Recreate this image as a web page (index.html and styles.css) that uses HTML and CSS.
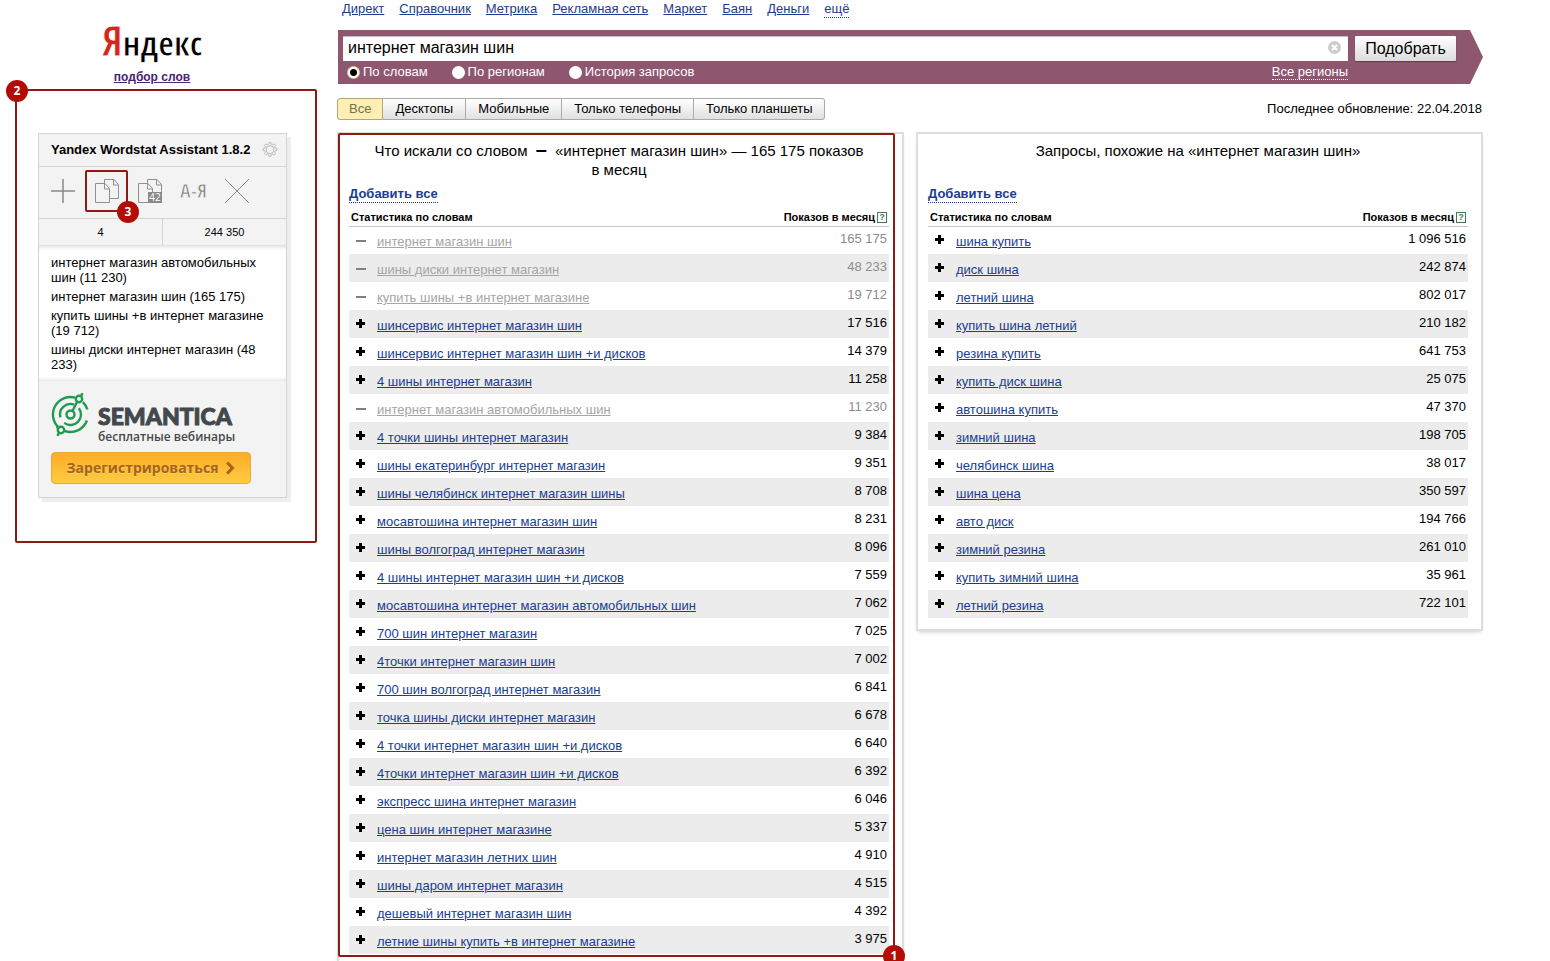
FILE: index.html
```html
<!DOCTYPE html>
<html lang="ru">
<head>
<meta charset="utf-8">
<title>Подбор слов</title>
<link rel="stylesheet" href="styles.css">
</head>
<body>
<div class="page">
  <aside class="side">
    <div class="logo"><span class="logo-first">Я</span>ндекс</div>
    <a class="sublogo" href="#">подбор слов</a>
    <div class="side-frame">
      <span class="badge badge-2">2</span>
      <section class="assist">
        <header class="assist-head">
          <h2 class="assist-title">Yandex Wordstat Assistant 1.8.2</h2>
          <button class="icon-btn" type="button" aria-label="Настройки">
            <svg width="16" height="16" viewBox="0 0 16 16" fill="none" stroke="#bdbdbd"><path d="M6.600 2.400 7 .6h2l.4 1.800 1.200.5 1.600-1 1.400 1.400-1 1.600.5 1.200 1.900.4v2l-1.900.4-.5 1.200 1 1.600-1.400 1.400-1.600-1-1.200.5-.4 1.800H7l-.4-1.800-1.200-.5-1.600 1-1.400-1.400 1-1.600-.5-1.200L1 8.500v-2l1.900-.4.5-1.200-1-1.600 1.400-1.400 1.600 1z"/><circle cx="8" cy="7.700" r="4"/></svg>
          </button>
        </header>
        <div class="tools">
          <button class="icon-btn" type="button" aria-label="Добавить"><svg width="24" height="24" viewBox="0 0 24 24" stroke="#8a8a8a" stroke-width="1.500"><path d="M12 0v24M0 12h24"/></svg></button>
          <span class="tool-mark">
            <button class="icon-btn" type="button" aria-label="Копировать"><svg width="24" height="24" viewBox="0 0 24 24" fill="none" stroke="#909090"><path d="M.5 4.500H10l4.500 5v14H.5zM9.500 4.500v5.500h5M9.500 4V.5H19l4.500 5v14H15M18.500.5V6h5"/></svg></button>
            <span class="badge badge-3">3</span>
          </span>
          <button class="icon-btn copy-count" type="button" aria-label="Копировать с частотой"><svg width="24" height="24" viewBox="0 0 24 24" fill="none" stroke="#909090"><path d="M.5 4.500H10l4.500 5v14H.5zM9.500 4.500v5.500h5M9.500 4V.5H19l4.500 5v14H15M18.500.5V6h5"/></svg><span class="count">42</span></button>
          <button class="icon-btn sort" type="button">А-Я</button>
          <button class="icon-btn" type="button" aria-label="Очистить"><svg width="24" height="24" viewBox="0 0 24 24" stroke="#8a8a8a"><path d="M0 0l24 24M24 0 0 24"/></svg></button>
        </div>
        <div class="totals"><span class="total">4</span><span class="total">244 350</span></div>
        <ul class="words">
          <li>интернет магазин автомобильных шин (11 230)</li>
          <li>интернет магазин шин (165 175)</li>
          <li>купить шины +в интернет магазине (19 712)</li>
          <li>шины диски интернет магазин (48 233)</li>
        </ul>
        <div class="promo">
          <div class="brand">
            <svg width="38" height="43" viewBox="0 0 38 43" fill="none" stroke="#1f9a50" stroke-width="2.400"><path d="M24 4.600A17.500 17.500 0 0 0 7.100 33.900M31.900 9.100a17.500 17.500 0 0 1 4.500 7.400M35.900 27.500A17.500 17.500 0 0 1 13.500 37.900M23 11.600A10.500 10.500 0 0 0 9.400 24.400M27.900 15.200A10.500 10.500 0 0 1 13.200 29.900M21.500 18 26 9"/><circle cx="19.500" cy="21.500" r="4"/><circle cx="28" cy="6" r="3.200"/><circle cx="10" cy="37" r="3.200"/><path d="M30 3.500 31.500 0M8 39.500 6.500 43M7 35.500l-1-2"/></svg>
            <div class="brand-text"><b class="brand-name">SEMANTICA</b><span class="brand-sub">бесплатные вебинары</span></div>
          </div>
          <button class="signup" type="button">Зарегистрироваться<svg width="9" height="14" viewBox="0 0 9 14" fill="none" stroke="#a5641c" stroke-width="3"><path d="M1 1.500 6.500 7 1 12.500"/></svg></button>
        </div>
      </section>
    </div>
  </aside>
  <main class="main">
    <nav class="nav">
      <a href="#">Директ</a><a href="#">Справочник</a><a href="#">Метрика</a><a href="#">Рекламная сеть</a><a href="#">Маркет</a><a href="#">Баян</a><a href="#">Деньги</a><a class="more" href="#">ещё</a>
    </nav>
    <form class="search">
      <div class="search-left">
        <div class="field">
          <input class="query" type="text" value="интернет магазин шин" aria-label="Запрос">
          <button class="clear" type="button" aria-label="Очистить запрос"><svg width="13" height="13" viewBox="0 0 13 13"><circle cx="6.500" cy="6.500" r="6.500" fill="#ccc"/><path d="M4 4l5 5M9 4 4 9" stroke="#fff" stroke-width="2"/></svg></button>
        </div>
        <div class="modes">
          <label class="mode"><input type="radio" name="mode" checked>По словам</label>
          <label class="mode"><input type="radio" name="mode">По регионам</label>
          <label class="mode"><input type="radio" name="mode">История запросов</label>
          <a class="regions" href="#">Все регионы</a>
        </div>
      </div>
      <button class="submit" type="button">Подобрать</button>
    </form>
    <div class="bar">
      <div class="tabs">
        <button class="tab tab-on" type="button">Все</button><button class="tab" type="button">Десктопы</button><button class="tab" type="button">Мобильные</button><button class="tab" type="button">Только телефоны</button><button class="tab" type="button">Только планшеты</button>
      </div>
      <span class="updated">Последнее обновление: 22.04.2018</span>
    </div>
    <div class="panels">
      <section class="panel panel-tall">
        <h1 class="title">Что искали со словом <b class="dash">–</b> «интернет магазин шин» — 165 175 показов в месяц</h1>
        <a class="add-all" href="#">Добавить все</a>
        <table class="stats">
          <thead><tr><th class="left" colspan="2">Статистика по словам</th><th class="right">Показов в месяц<a class="help" href="#">?</a></th></tr></thead>
          <tbody>
            <tr class="used"><td><button class="sign minus" aria-label="Убрать"></button></td><td><a href="#">интернет магазин шин</a></td><td>165 175</td></tr>
            <tr class="used"><td><button class="sign minus" aria-label="Убрать"></button></td><td><a href="#">шины диски интернет магазин</a></td><td>48 233</td></tr>
            <tr class="used"><td><button class="sign minus" aria-label="Убрать"></button></td><td><a href="#">купить шины +в интернет магазине</a></td><td>19 712</td></tr>
            <tr><td><button class="sign plus" aria-label="Добавить"></button></td><td><a href="#">шинсервис интернет магазин шин</a></td><td>17 516</td></tr>
            <tr><td><button class="sign plus" aria-label="Добавить"></button></td><td><a href="#">шинсервис интернет магазин шин +и дисков</a></td><td>14 379</td></tr>
            <tr><td><button class="sign plus" aria-label="Добавить"></button></td><td><a href="#">4 шины интернет магазин</a></td><td>11 258</td></tr>
            <tr class="used"><td><button class="sign minus" aria-label="Убрать"></button></td><td><a href="#">интернет магазин автомобильных шин</a></td><td>11 230</td></tr>
            <tr><td><button class="sign plus" aria-label="Добавить"></button></td><td><a href="#">4 точки шины интернет магазин</a></td><td>9 384</td></tr>
            <tr><td><button class="sign plus" aria-label="Добавить"></button></td><td><a href="#">шины екатеринбург интернет магазин</a></td><td>9 351</td></tr>
            <tr><td><button class="sign plus" aria-label="Добавить"></button></td><td><a href="#">шины челябинск интернет магазин шины</a></td><td>8 708</td></tr>
            <tr><td><button class="sign plus" aria-label="Добавить"></button></td><td><a href="#">мосавтошина интернет магазин шин</a></td><td>8 231</td></tr>
            <tr><td><button class="sign plus" aria-label="Добавить"></button></td><td><a href="#">шины волгоград интернет магазин</a></td><td>8 096</td></tr>
            <tr><td><button class="sign plus" aria-label="Добавить"></button></td><td><a href="#">4 шины интернет магазин шин +и дисков</a></td><td>7 559</td></tr>
            <tr><td><button class="sign plus" aria-label="Добавить"></button></td><td><a href="#">мосавтошина интернет магазин автомобильных шин</a></td><td>7 062</td></tr>
            <tr><td><button class="sign plus" aria-label="Добавить"></button></td><td><a href="#">700 шин интернет магазин</a></td><td>7 025</td></tr>
            <tr><td><button class="sign plus" aria-label="Добавить"></button></td><td><a href="#">4точки интернет магазин шин</a></td><td>7 002</td></tr>
            <tr><td><button class="sign plus" aria-label="Добавить"></button></td><td><a href="#">700 шин волгоград интернет магазин</a></td><td>6 841</td></tr>
            <tr><td><button class="sign plus" aria-label="Добавить"></button></td><td><a href="#">точка шины диски интернет магазин</a></td><td>6 678</td></tr>
            <tr><td><button class="sign plus" aria-label="Добавить"></button></td><td><a href="#">4 точки интернет магазин шин +и дисков</a></td><td>6 640</td></tr>
            <tr><td><button class="sign plus" aria-label="Добавить"></button></td><td><a href="#">4точки интернет магазин шин +и дисков</a></td><td>6 392</td></tr>
            <tr><td><button class="sign plus" aria-label="Добавить"></button></td><td><a href="#">экспресс шина интернет магазин</a></td><td>6 046</td></tr>
            <tr><td><button class="sign plus" aria-label="Добавить"></button></td><td><a href="#">цена шин интернет магазине</a></td><td>5 337</td></tr>
            <tr><td><button class="sign plus" aria-label="Добавить"></button></td><td><a href="#">интернет магазин летних шин</a></td><td>4 910</td></tr>
            <tr><td><button class="sign plus" aria-label="Добавить"></button></td><td><a href="#">шины даром интернет магазин</a></td><td>4 515</td></tr>
            <tr><td><button class="sign plus" aria-label="Добавить"></button></td><td><a href="#">дешевый интернет магазин шин</a></td><td>4 392</td></tr>
            <tr><td><button class="sign plus" aria-label="Добавить"></button></td><td><a href="#">летние шины купить +в интернет магазине</a></td><td>3 975</td></tr>
          </tbody>
        </table>
        <div class="results-frame"><span class="badge badge-1">1</span></div>
      </section>
      <section class="panel">
        <h2 class="title">Запросы, похожие на «интернет магазин шин»</h2>
        <a class="add-all" href="#">Добавить все</a>
        <table class="stats">
          <thead><tr><th class="left" colspan="2">Статистика по словам</th><th class="right">Показов в месяц<a class="help" href="#">?</a></th></tr></thead>
          <tbody>
            <tr><td><button class="sign plus" aria-label="Добавить"></button></td><td><a href="#">шина купить</a></td><td>1 096 516</td></tr>
            <tr><td><button class="sign plus" aria-label="Добавить"></button></td><td><a href="#">диск шина</a></td><td>242 874</td></tr>
            <tr><td><button class="sign plus" aria-label="Добавить"></button></td><td><a href="#">летний шина</a></td><td>802 017</td></tr>
            <tr><td><button class="sign plus" aria-label="Добавить"></button></td><td><a href="#">купить шина летний</a></td><td>210 182</td></tr>
            <tr><td><button class="sign plus" aria-label="Добавить"></button></td><td><a href="#">резина купить</a></td><td>641 753</td></tr>
            <tr><td><button class="sign plus" aria-label="Добавить"></button></td><td><a href="#">купить диск шина</a></td><td>25 075</td></tr>
            <tr><td><button class="sign plus" aria-label="Добавить"></button></td><td><a href="#">автошина купить</a></td><td>47 370</td></tr>
            <tr><td><button class="sign plus" aria-label="Добавить"></button></td><td><a href="#">зимний шина</a></td><td>198 705</td></tr>
            <tr><td><button class="sign plus" aria-label="Добавить"></button></td><td><a href="#">челябинск шина</a></td><td>38 017</td></tr>
            <tr><td><button class="sign plus" aria-label="Добавить"></button></td><td><a href="#">шина цена</a></td><td>350 597</td></tr>
            <tr><td><button class="sign plus" aria-label="Добавить"></button></td><td><a href="#">авто диск</a></td><td>194 766</td></tr>
            <tr><td><button class="sign plus" aria-label="Добавить"></button></td><td><a href="#">зимний резина</a></td><td>261 010</td></tr>
            <tr><td><button class="sign plus" aria-label="Добавить"></button></td><td><a href="#">купить зимний шина</a></td><td>35 961</td></tr>
            <tr><td><button class="sign plus" aria-label="Добавить"></button></td><td><a href="#">летний резина</a></td><td>722 101</td></tr>
          </tbody>
        </table>
      </section>
    </div>
  </main>
</div>
</body>
</html>
```

FILE: styles.css
```css
* { box-sizing: border-box; }
body { margin: 0; background: #fff; color: #000; font: 13px/16px "Liberation Sans", Arial, sans-serif; }
button, input { font: inherit; color: inherit; margin: 0; padding: 0; }
button { border: 0; background: none; cursor: pointer; }
svg { display: block; flex: none; }
a { color: #1a3d8f; }

.page { display: flex; height: 100vh; overflow: hidden; }

/* Sidebar */
.side { display: flex; flex-direction: column; align-items: center; width: 304px; flex: none; padding-top: 14px; }
.logo { font: 34px/52px "Open Sans Condensed", "Liberation Sans Narrow", sans-serif; -webkit-text-stroke: 1px #fff; }
.logo-first { color: #d4261c; font-size: 42px; }
.sublogo { color: #4a2375; font-weight: bold; font-size: 12px; line-height: 16px; }
.side-frame { position: relative; width: 302px; height: 454px; margin: 4px 0 0 28px; padding: 42px 0 0 21px; border: 2px solid #8c1c13; border-radius: 2px; }
.badge { position: absolute; display: flex; align-items: center; justify-content: center; width: 22px; height: 22px; border-radius: 50%; background: #b30c05; color: #fff; font: bold 12px/14px "Noto Sans", "Open Sans", sans-serif; }
.badge-2 { left: -11px; top: -11px; }

.assist { width: 249px; border: 1px solid #d2d4d6; background: #f3f3f3; box-shadow: 4px 4px 0 #eee; }
.assist-head { display: flex; align-items: center; justify-content: space-between; height: 33px; padding: 0 8px 0 12px; border-bottom: 1px solid #d2d4d6; }
.assist-title { margin: 0; font-size: 13px; }
.icon-btn { display: block; color: #909090; }
.tools { display: flex; align-items: center; height: 52px; padding: 0 12px 4px; border-bottom: 1px solid #d2d4d6; }
.tool-mark { position: relative; display: flex; align-items: center; justify-content: center; width: 43px; height: 42px; margin: 0 10px; border: 2px solid #8c1c13; border-radius: 2px; }
.badge-3 { left: 30px; top: 29px; }
.copy-count { position: relative; }
.count { position: absolute; right: 0; bottom: 0; width: 14px; background: #8a8a8a; color: #fff; font: 10px/11px "Open Sans", sans-serif; }
.sort { width: 63px; color: #808080; font: 20px/24px "Open Sans Condensed", "Liberation Sans Narrow", sans-serif; text-align: center; -webkit-text-stroke: 1px #f3f3f3; }
.totals { display: flex; height: 27px; border-bottom: 1px solid #e2e2e2; font-size: 11px; line-height: 26px; text-align: center; }
.total { flex: 1; }
.total + .total { border-left: 1px solid #d2d4d6; }
.words { margin: 0; padding: 9px 20px 9px 12px; list-style: none; background: #fff; line-height: 15px; box-shadow: inset 0 4px 4px -3px #ddd, inset 0 -4px 4px -3px #ddd; }
.words li + li { margin-top: 4px; }
.promo { padding: 12px 12px 13px; }
.brand { display: flex; align-items: flex-start; gap: 9px; height: 59px; }
.brand-text { display: flex; flex-direction: column; color: #43484c; }
.brand-name { padding-top: 9px; font: 900 23px/28px Lato, sans-serif; -webkit-text-stroke: 1px #43484c; }
.brand-sub { font: 600 12px/14px "Open Sans", sans-serif; }
.signup { display: flex; align-items: center; justify-content: center; gap: 8px; width: 200px; height: 32px; border: 1px solid #e5a83a; border-radius: 4px; background: linear-gradient(#ffad26, #fdcb41); color: #a5641c; font: bold 14px/20px "Open Sans", sans-serif; text-shadow: 0 1px 0 #fdd266; }

/* Main column */
.main { flex: 1; min-width: 0; margin: 0 67px 0 33px; }
.nav { display: flex; gap: 15px; padding: 1px 5px 0; height: 30px; }
.more { text-decoration: none; border-bottom: 1px dotted #1a3d8f; align-self: flex-start; }
.search { display: flex; align-items: flex-start; gap: 7px; height: 54px; margin-left: 1px; padding: 6px 27px 0 5px; background: #8f566f; clip-path: polygon(0 0, calc(100% - 13px) 0, 100% 50%, calc(100% - 13px) 100%, 0 100%); }
.search-left { flex: 1; }
.field { position: relative; }
.query { display: block; width: 100%; height: 25px; padding: 0 30px 1px 5px; border: 0; box-shadow: inset 0 1px 1px #bbb; background: #fff; font-size: 16px; outline: 0; }
.clear { position: absolute; right: 7px; top: 5px; }
.modes { display: flex; align-items: flex-start; gap: 24px; padding: 3px 0 0 4px; color: #fff; }
.mode { display: flex; align-items: center; gap: 3px; }
.mode input { appearance: none; width: 13px; height: 13px; border-radius: 50%; background: #fff; }
.mode input:checked { border: 1px solid #e0cfa0; background: radial-gradient(#000 3px, #fff 4px); }
.regions { margin-left: auto; line-height: 15px; color: #fff; text-decoration: none; border-bottom: 1px dotted #fff; }
.submit { width: 101px; height: 25px; border-radius: 1px; background: linear-gradient(#fff, #dcdcdc); font-size: 16px; box-shadow: 0 1px 1px #63384b; }
.bar { display: flex; align-items: center; justify-content: space-between; height: 48px; padding: 1px 1px 0 0; }
.tabs { display: flex; }
.tab { height: 22px; padding: 0 12px; border: 1px solid #aaa; border-left-width: 0; background: linear-gradient(#fff, #e0e0e0); }
.tab:last-child { border-radius: 0 3px 3px 0; }
.tab-on { padding: 0 11px; border-left-width: 1px; border-radius: 3px 0 0 3px; border-color: #b5a56e; background: #fdeeb3; color: #77704c; }
.panels { display: grid; grid-template-columns: 1fr 1fr; align-items: start; gap: 12px; }
.panel { position: relative; padding: 7px 13px 11px 10px; border: 2px solid #ddd; box-shadow: 0 3px 4px -2px #ccc; }
.panel-tall { padding-bottom: 40px; }
.title { margin: 0; height: 45px; padding: 0 22px; font-size: 15px; line-height: 19px; font-weight: normal; text-align: center; }
.dash { margin: 0 4px; font-size: 20px; line-height: 1px; }
.add-all { display: inline-block; line-height: 16px; font-weight: bold; text-decoration: none; border-bottom: 1px dotted #1a3d8f; }
.stats { width: 100%; margin-top: 4px; border-collapse: collapse; }
.stats th { height: 19px; padding: 2px 2px 1px; border-bottom: 1px solid #c4c8c4; font-size: 11px; line-height: 14px; }
.left { text-align: left; }
.right { text-align: right; }
.help { display: inline-block; width: 10px; height: 11px; margin-left: 2px; border: 1px solid #3f7a50; color: #3f7a50; font-size: 9px; line-height: 9px; text-align: center; text-decoration: none; vertical-align: 1px; }
.stats td { height: 28px; padding: 0 2px 2px 0; }
.stats td:first-child { width: 28px; padding: 0 6px 1px; }
.stats td:nth-child(2) { padding: 4px 0 0; }
.stats td:last-child { text-align: right; }
.stats tbody tr:nth-child(even) { background: #ececec; }
.sign { display: block; width: 11px; height: 9px; background-repeat: no-repeat; background-position: center; }
.plus { background-image: linear-gradient(#000, #000), linear-gradient(#000, #000); background-size: 9px 3px, 3px 9px; }
.minus { height: 13px; background-image: linear-gradient(#808080, #808080); background-size: 10px 2px; background-position: center 7px; }
.used td { color: #8c8c8c; }
.used a { color: #a5a5a5; }
.results-frame { position: absolute; left: -1px; top: -1px; right: 7px; height: 824px; border: 2px solid #8c1c13; border-radius: 2px; pointer-events: none; }
.badge-1 { right: -12px; bottom: -12px; }
```
